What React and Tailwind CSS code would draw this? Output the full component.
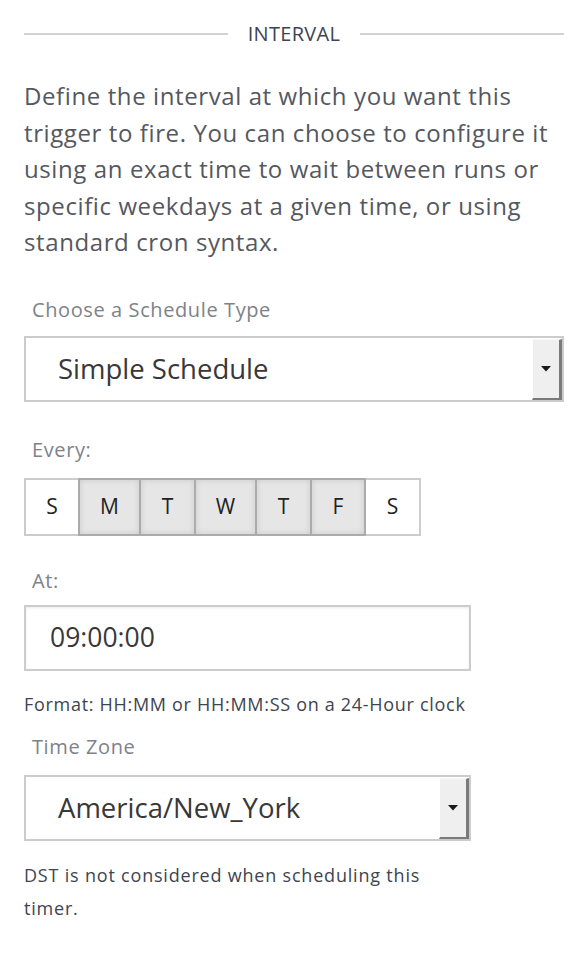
import React from "react";

const days = [
  { l: "S", on: false, w: "w-[56px]" },
  { l: "M", on: true, w: "w-[63px]" },
  { l: "T", on: true, w: "w-[57px]" },
  { l: "W", on: true, w: "w-[63px]" },
  { l: "T", on: true, w: "w-[57px]" },
  { l: "F", on: true, w: "w-[56px]" },
  { l: "S", on: false, w: "w-[57px]" },
];

function Arrow() {
  return (
    <svg width="10" height="6" viewBox="0 0 10 6">
      <path d="M0 0 L10 0 L5 5.5 Z" fill="#1a1a1a" />
    </svg>
  );
}

function SelectBox({ value, width }) {
  return (
    <div className={`${width} h-[66px] border-2 border-[#cccccc] bg-white flex items-stretch`}>
      <div className="flex-1 flex items-center pl-[32px] text-[27.5px] font-medium text-[#383838] leading-none">
        {value}
      </div>
      <div className="w-[30px] mt-[1px] bg-[#efefef] border-t border-l border-t-[#f8f8f8] border-l-[#ffffff] border-r-[3px] border-b-[2px] border-r-[#7a7a7a] border-b-[#7a7a7a] flex items-center justify-center">
        <Arrow />
      </div>
    </div>
  );
}

export default function App() {
  return (
    <div className="w-[588px] h-[954px] bg-white px-6 font-['Open_Sans',sans-serif] overflow-hidden">
      <div className="mt-[24px] h-[20px] flex items-center gap-5">
        <div className="flex-1 h-[2px] bg-[#d2d2d2]" />
        <span className="text-[20px] font-medium tracking-[0.3px] text-[#3d4454] leading-none">INTERVAL</span>
        <div className="flex-1 h-[2px] bg-[#d2d2d2]" />
      </div>

      <p className="mt-[34px] text-[24px] font-medium tracking-[0.6px] leading-[36.5px] text-[#55585e]">
        Define the interval at which you want this
        <br />
        trigger to fire. You can choose to configure it
        <br />
        using an exact time to wait between runs or
        <br />
        specific weekdays at a given time, or using
        <br />
        standard cron syntax.
      </p>

      <div className="mt-[35px] pl-2 text-[20px] font-medium tracking-[0.6px] leading-[28px] text-[#7e8289]">Choose a Schedule Type</div>
      <div className="mt-[12px]">
        <SelectBox value="Simple Schedule" width="w-full" />
      </div>

      <div className="mt-[34px] pl-2 text-[20px] font-medium tracking-[0.6px] leading-[28px] text-[#7e8289]">Every:</div>
      <div className="mt-[14px] flex">
        {days.map((d, i) => (
          <div
            key={i}
            className={`${d.w} h-[58px] border-2 flex items-center justify-center text-[21px] font-medium text-[#222222] ${i > 0 ? "-ml-[2px]" : ""} ${
              d.on
                ? "relative z-10 bg-[#e6e6e6] border-[#ababab] shadow-[inset_0_0_6px_rgba(0,0,0,0.12)]"
                : "bg-white border-[#cccccc]"
            }`}
          >
            {d.l}
          </div>
        ))}
      </div>

      <div className="mt-[31px] pl-2 text-[20px] font-medium tracking-[0.6px] leading-[28px] text-[#7e8289]">At:</div>
      <div className="mt-[10px] w-[447px] h-[66px] border-2 border-[#cccccc] flex items-center pl-[24px] text-[26.5px] font-medium text-[#383838] shadow-[inset_0_1px_3px_rgba(0,0,0,0.08)]">
        09:00:00
      </div>

      <div className="mt-[20px] text-[18px] font-medium tracking-[0.7px] leading-[26px] text-[#3e4450]">
        Format: HH:MM or HH:MM:SS on a 24-Hour clock
      </div>

      <div className="mt-[16px] pl-2 text-[20px] font-medium tracking-[0.6px] leading-[28px] text-[#7e8289]">Time Zone</div>
      <div className="mt-[14px]">
        <SelectBox value="America/New_York" width="w-[447px]" />
      </div>

      <p className="mt-[18px] text-[18px] font-medium tracking-[0.8px] leading-[33px] text-[#3e4450]">
        DST is not considered when scheduling this
        <br />
        timer.
      </p>
    </div>
  );
}
